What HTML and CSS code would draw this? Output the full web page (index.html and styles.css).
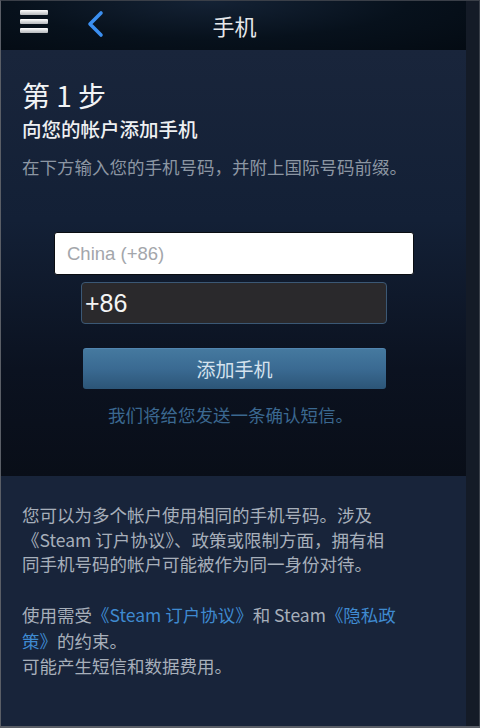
FILE: index.html
```html
<!DOCTYPE html>
<html lang="zh">
<head>
<meta charset="utf-8">
<link rel="stylesheet" href="styles.css">
</head>
<body>
<div class="frame">
  <div class="main">
    <header class="topbar">
      <div class="menu"><span></span><span></span><span></span></div>
      <svg class="back" width="20" height="30" viewBox="0 0 20 30"><path d="M15 4 L4 15 L15 26" fill="none" stroke="#3b8ff0" stroke-width="3.6" stroke-linecap="round" stroke-linejoin="round"/></svg>
      <div class="title">手机</div>
    </header>
    <section class="card">
      <h1 class="step">第 1 步</h1>
      <h2 class="sub">向您的帐户添加手机</h2>
      <p class="hint">在下方输入您的手机号码，并附上国际号码前缀。</p>
      <div class="form">
        <div class="country">China (+86)</div>
        <div class="phone">+86</div>
        <div class="btn">添加手机</div>
        <div class="note">我们将给您发送一条确认短信。</div>
      </div>
    </section>
    <section class="info">
      <p>您可以为多个帐户使用相同的手机号码。涉及《Steam 订户协议》、政策或限制方面，拥有相同手机号码的帐户可能被作为同一身份对待。</p>
      <p class="p2"><span class="line">使用需受<span class="link">《Steam 订户协议》</span>和 Steam<span class="link">《隐私政</span></span><span class="line"><span class="link">策》</span>的约束。</span><span class="line">可能产生短信和数据费用。</span></p>
    </section>
  </div>
  <div class="side"></div>
</div>
</body>
</html>
```
FILE: styles.css
```css
html, body {
  margin: 0;
  padding: 0;
  background: #18233a;
}
body {
  width: 480px;
  height: 728px;
  overflow: hidden;
  font-family: "Noto Sans CJK SC", "Liberation Sans", sans-serif;
}
.frame {
  display: flex;
  width: 480px;
  height: 728px;
  box-sizing: border-box;
  border-left: 1px solid #5a5e66;
  border-top: 1px solid #3a3f48;
  border-bottom: 2px solid #5a5e66;
}
.main {
  width: 465px;
  display: flex;
  flex-direction: column;
  background: #19253a;
}
.side {
  flex: 1;
  background: #141b27;
  border-right: 1px solid #3a404a;
}
.topbar {
  height: 49px;
  display: flex;
  align-items: center;
  position: relative;
  background: radial-gradient(ellipse at 45% 0%, #142235 0%, #07111c 55%, #040b13 100%);
}
.menu {
  margin-left: 19px;
  width: 28px;
  display: flex;
  flex-direction: column;
  gap: 4px;
  margin-top: -8px;
}
.menu span {
  display: block;
  height: 5px;
  border-radius: 1px;
  background: linear-gradient(#ffffff, #b4b7bb);
}
.back {
  margin-left: 38px;
  margin-top: -3px;
}
.title {
  position: absolute;
  left: 0;
  right: 0;
  top: 9px;
  text-align: center;
  padding-left: 2px;
  color: #e6e8eb;
  font-size: 22px;
  line-height: 30px;
  pointer-events: none;
}
.card {
  height: 426px;
  padding: 26px 0 0 21px;
  box-sizing: border-box;
  background: linear-gradient(180deg, #19253b 0%, #132036 40%, #0b1220 75%, #090e18 100%);
}
.step {
  margin: 0;
  font-weight: 400;
  font-size: 28px;
  line-height: 38px;
  color: #f2f4f6;
}
.sub {
  margin: 2px 0 0;
  font-weight: 500;
  font-size: 19.5px;
  line-height: 26px;
  color: #eef0f2;
}
.hint {
  margin: 13px 0 0;
  font-size: 17.5px;
  line-height: 24px;
  color: #8c96a3;
}
.form {
  margin-left: 32px;
  margin-top: 53px;
  width: 360px;
  display: flex;
  flex-direction: column;
}
.country {
  height: 43px;
  box-sizing: border-box;
  background: #ffffff;
  border: 1px solid #0a0d12;
  border-radius: 3px;
  padding-left: 12px;
  line-height: 41px;
  font-family: "Liberation Sans", Arial, sans-serif;
  font-size: 18.5px;
  color: #a3a6ab;
}
.phone {
  margin: 7px 0 0 27px;
  width: 306px;
  height: 42px;
  box-sizing: border-box;
  background: #2a292c;
  border: 1px solid #3b5875;
  border-radius: 4px;
  padding-left: 3px;
  line-height: 40px;
  font-family: "Liberation Sans", Arial, sans-serif;
  font-size: 25px;
  color: #f4f4f4;
}
.btn {
  margin: 24px 0 0 29px;
  width: 303px;
  height: 41px;
  box-sizing: border-box;
  border-radius: 3px;
  border-top: 1px solid #5285b0;
  background: linear-gradient(180deg, #45799f 0%, #3a6a92 50%, #2c5577 100%);
  text-align: center;
  line-height: 39px;
  font-size: 19px;
  color: #d5e2ee;
}
.note {
  margin: 14px 0 0 25px;
  width: 303px;
  text-align: center;
  font-size: 17.5px;
  line-height: 24px;
  color: #3b6890;
}
.info {
  flex: 1;
  padding: 27px 68px 0 21px;
  background: #18243a;
  color: #a7afba;
  font-size: 17.5px;
  line-height: 24.5px;
}
.info p {
  margin: 0;
}
.info .p2 {
  margin-top: 25.5px;
  line-height: 25.5px;
  display: flex;
  flex-direction: column;
}
.line {
  display: block;
  white-space: nowrap;
}
.link {
  color: #3f8ad0;
}
```
